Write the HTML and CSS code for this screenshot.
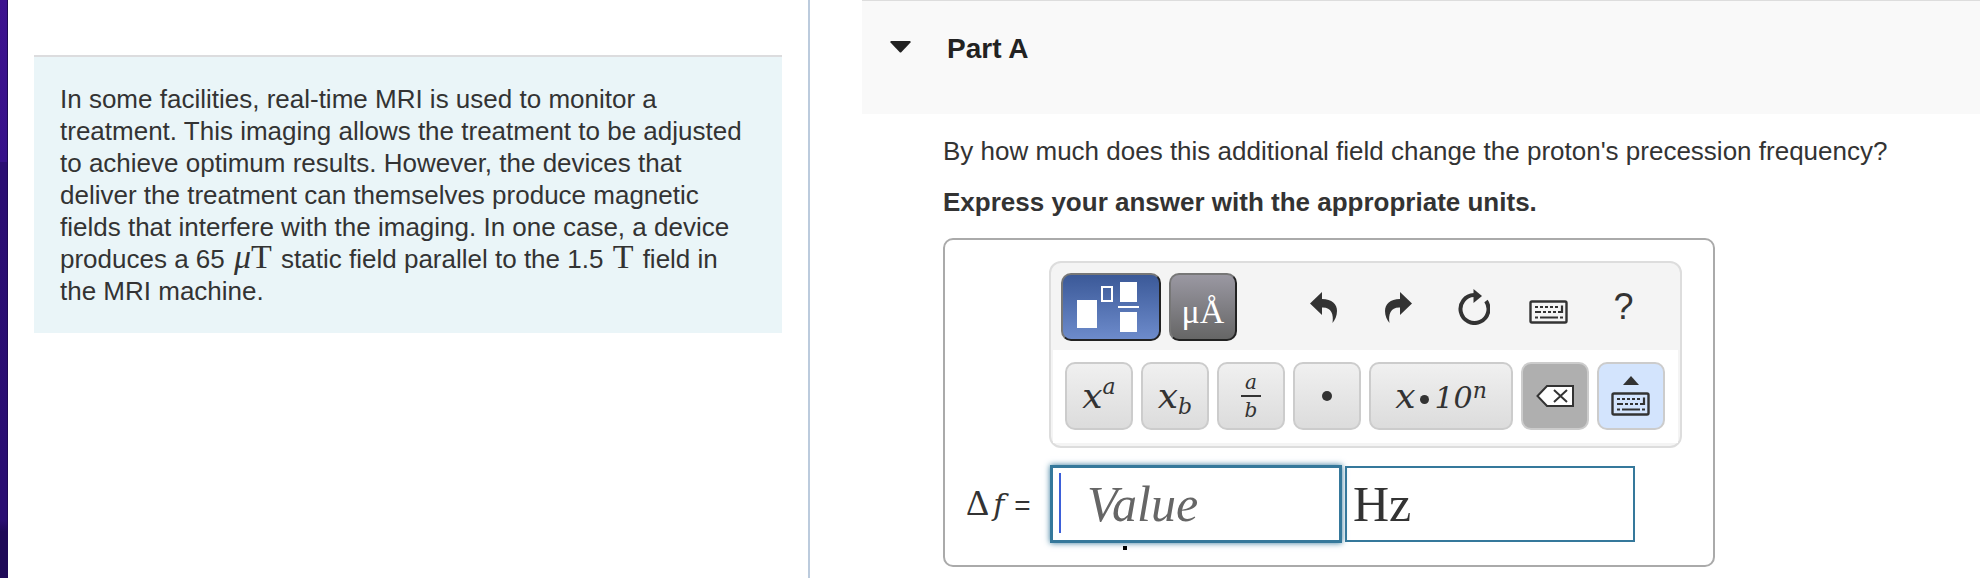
FILE: index.html
```html
<!DOCTYPE html>
<html lang="en">
<head>
<meta charset="utf-8">
<title>Part A</title>
<link rel="stylesheet" href="styles.css">
</head>
<body>
<svg class="defs" aria-hidden="true">
  <symbol id="keyboard" viewBox="0 0 40 24">
    <rect x="1.5" y="1.5" width="36" height="21" rx="1.5" fill="none" stroke="#333" stroke-width="2.4"/>
    <path fill="none" stroke="#333" stroke-width="2.2" d="M6 7h3M11 7h3M16 7h3M21 7h3M26 7h3M6 12h6M14 12h3M19 12h3M24 12h3M6 17.500h3M11 17.500h18M31 17.500h3M29 12h4V5.500"/>
  </symbol>
</svg>
<div class="page">
  <div class="edge"></div>
  <aside class="side">
    <p class="intro">In some facilities, real-time MRI is used to monitor a treatment. This imaging allows the treatment to be adjusted to achieve optimum results. However, the devices that deliver the treatment can themselves produce magnetic fields that interfere with the imaging. In one case, a device produces a 65 <span class="math"><i>μ</i>T</span> static field parallel to the 1.5 <span class="math">T</span> field in the MRI machine.</p>
  </aside>
  <main class="main">
    <header class="part">
      <button class="toggle" aria-label="Collapse Part A">
        <svg width="21" height="12" viewBox="0 0 21 12"><path fill="#222" d="M1 0h19q1 0 .5 1.500L11.500 11q-1 1-2 0L.5 1.500Q0 0 1 0z"/></svg>
      </button>
      <h1 class="part-title">Part A</h1>
    </header>
    <section class="question">
      <p class="text">By how much does this additional field change the proton's precession frequency?</p>
      <p class="text strong">Express your answer with the appropriate units.</p>
      <div class="answer">
        <div class="palette">
          <div class="bar">
            <button class="mode templates" aria-label="Templates">
              <svg width="68" height="52" viewBox="0 0 68 52"><path fill="#fff" d="M0 19h20v28H0zM43 1h17v20H43zM43 31h17v20H43zM41 25h21v2H41z"/><rect x="25" y="6" width="10" height="14" fill="none" stroke="#fff" stroke-width="2"/></svg>
            </button>
            <button class="mode symbols">μÅ</button>
            <div class="tools">
              <button class="tool" aria-label="Undo"><svg width="27" height="31" viewBox="0 0 27 31"><path fill="#333" d="M0 11.500 12 0v7C22 7 27 12 27 19c0 5-2 9-4.500 12C24 22 21 15 12 15.500V23z"/></svg></button>
              <button class="tool" aria-label="Redo"><svg width="27" height="31" viewBox="0 0 27 31"><path fill="#333" d="M27 11.500 15 0v7C5 7 0 12 0 19c0 5 2 9 4.500 12C3 22 6 15 15 15.500V23z"/></svg></button>
              <button class="tool" aria-label="Reset"><svg width="32" height="36" viewBox="0 0 32 36"><path fill="none" stroke="#333" stroke-width="4" d="M28 12A14 14 0 1 1 16 6"/><path fill="#333" d="M15.500 0 24 7l-8.500 7z"/></svg></button>
              <button class="tool" aria-label="Keyboard shortcuts"><svg class="key" width="40" height="24"><use href="#keyboard"/></svg></button>
              <button class="tool help">?</button>
            </div>
          </div>
          <div class="keys">
            <button class="key-btn"><i>x<sup>a</sup></i></button>
            <button class="key-btn"><i>x<sub>b</sub></i></button>
            <button class="key-btn"><i class="frac"><span class="num">a</span><span>b</span></i></button>
            <button class="key-btn" aria-label="Dot"><svg width="10" height="10" viewBox="0 0 10 10"><circle cx="5" cy="5" r="5" fill="#333"/></svg></button>
            <button class="key-btn wide"><i>x<svg class="times" width="9" height="9" viewBox="0 0 9 9"><circle cx="4.500" cy="4.500" r="4.500" fill="#333"/></svg><span class="ten">10</span><sup class="power">n</sup></i></button>
            <button class="key-btn erase" aria-label="Backspace"><svg width="38" height="22" viewBox="0 0 38 22"><path fill="#fff" stroke="#333" stroke-width="2" d="M1.500 11 11 1h26v20H11z"/><path stroke="#333" stroke-width="2" d="m18 5 13 12M31 5 18 17"/></svg></button>
            <button class="key-btn pad" aria-label="Show keyboard"><svg width="16" height="9" viewBox="0 0 16 9"><path fill="#333" d="M8 0l8 9H0z"/></svg><svg width="40" height="24"><use href="#keyboard"/></svg></button>
          </div>
        </div>
        <label class="label" for="value">Δ<i>f</i><span class="eq">=</span></label>
        <div class="fields">
          <div class="value-wrap">
            <input class="field value" id="value" type="text" placeholder="Value">
            <span class="caret"></span>
            <span class="mark"></span>
          </div>
          <input class="field" type="text" value="Hz" aria-label="Units">
        </div>
      </div>
    </section>
  </main>
</div>
</body>
</html>
```
FILE: styles.css
```css
* { box-sizing: border-box; }
body {
  margin: 0;
  background: #fff;
  color: #333;
  font: 26px/32px "Liberation Sans", Arial, sans-serif;
}
.defs { display: none; }
svg { display: block; flex: none; }
button {
  display: flex;
  align-items: center;
  justify-content: center;
  margin: 0;
  padding: 0;
  border: 0;
  background: none;
  color: #333;
  font: inherit;
}
p, h1 { margin: 0; }

.page {
  display: grid;
  grid-template-columns: 8px 802fr 1170fr;
  min-height: 100vh;
}
.edge {
  border-right: 1px solid #1f0a55;
  background: linear-gradient(#3d138f 0, #37118a 28%, #2b0e73 28%, #2a0e72 90%, #1f0a58 92%);
}
.side {
  padding: 55px 26px 0;
  border-right: 2px solid #bccbdd;
}
.intro {
  padding: 26px;
  border-top: 2px solid #dcdcde;
  background: #eaf5f8;
}
.math {
  padding: 0 2px;
  font-family: "Liberation Serif", "Times New Roman", serif;
  font-size: 34px;
  line-height: 27px;
}

.main { padding-left: 52px; }
.part {
  display: flex;
  align-items: flex-start;
  gap: 36px;
  padding: 32px 28px 49px;
  border-top: 1px solid #ddd;
  background: #f9f9f9;
}
.toggle { height: 28px; }
.part-title {
  color: #222;
  font-size: 28px;
  line-height: 32px;
}
.question { padding: 21px 24px 10px 81px; }
.text { margin-bottom: 19px; }
.strong { margin-bottom: 20px; font-weight: bold; }

.answer {
  display: grid;
  grid-template-columns: 104px 1fr;
  row-gap: 18px;
  max-width: 772px;
  padding: 21px 31px 23px 0;
  border: 2px solid #aaa;
  border-radius: 10px;
}
.palette {
  grid-column: 2;
  padding: 0 2px 3px;
  border: 2px solid #ddd;
  border-radius: 12px;
  background: #f4f4f4;
}
.bar {
  display: flex;
  gap: 8px;
  padding: 10px 8px 9px;
}
.mode {
  height: 68px;
  border: 2px solid;
  border-color: #777 #222 #222 #777;
  border-radius: 10px;
}
.templates {
  width: 100px;
  background: linear-gradient(#3b5998, #6d8bcb);
}
.symbols {
  width: 68px;
  padding-top: 10px;
  background: linear-gradient(#9a98a2, #666);
  color: #fff;
  font: 34px/40px "Liberation Serif", "Times New Roman", serif;
}
.tools {
  display: flex;
  flex: 1;
  max-width: 416px;
  padding-left: 41px;
}
.tool { flex: 1; }
.key { margin-top: 10px; }
.help { font-size: 36px; }

.keys {
  display: flex;
  gap: 8px;
  padding: 12px 12px 13px;
  background: #fff;
}
.key-btn {
  flex: 0 1 68px;
  height: 68px;
  border: 2px solid #ccc;
  border-radius: 10px;
  background: linear-gradient(#f0f0f0, #dcdcdc);
  font: 36px/40px "DejaVu Serif", serif;
}
.key-btn sup, .key-btn sub {
  font-size: 22px;
  line-height: 20px;
}
.key-btn sup { vertical-align: 14px; }
.key-btn sub { vertical-align: -6px; }
.key-btn .power { vertical-align: 10px; }
.wide { flex-basis: 144px; }
.ten {
  font-size: 30px;
  line-height: 32px;
}
.times { display: inline-block; margin: 0 5px 4px; }
.frac {
  display: flex;
  flex-direction: column;
  width: 20px;
  font-size: 20px;
  line-height: 26px;
}
.num { border-bottom: 2px solid #333; }
.erase { background: #afafaf; }
.pad {
  flex-direction: column;
  gap: 7px;
  background: #d3e4fd;
}

.label {
  align-self: center;
  padding-left: 21px;
  font: 36px/40px "Liberation Serif", "Times New Roman", serif;
  white-space: nowrap;
}
.label i {
  padding: 0 10px 0 4px;
  font-family: "DejaVu Serif", serif;
  font-size: 30px;
}
.eq { font: 28px/32px "Liberation Sans", Arial, sans-serif; }
.fields {
  display: grid;
  grid-template-columns: 1fr 1fr;
  gap: 4px;
  max-width: 586px;
  padding-left: 2px;
}
.value-wrap { position: relative; }
.field {
  display: block;
  width: 100%;
  height: 76px;
  padding: 0 6px;
  border: 2px solid #35789b;
  border-radius: 0;
  outline: 0;
  background: #fff;
  color: #333;
  font: 50px/60px "Liberation Serif", "Times New Roman", serif;
}
.value {
  padding-left: 34px;
  box-shadow: 0 0 0 1px #35789b, 0 0 6px 1px #35789b;
}
.value::placeholder {
  color: #666;
  font-style: italic;
  opacity: 1;
}
.caret {
  position: absolute;
  top: 7px;
  left: 8px;
  width: 2px;
  height: 60px;
  background: #3b5fd9;
}
.mark {
  position: absolute;
  top: 80px;
  left: 72px;
  width: 4px;
  height: 4px;
  background: #000;
}
```
